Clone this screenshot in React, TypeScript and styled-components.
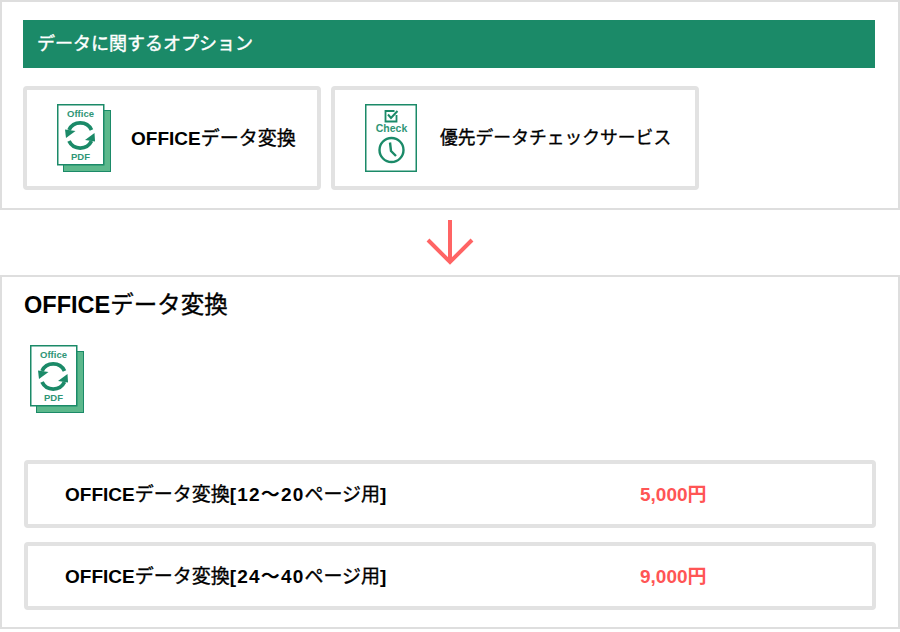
import styled, {createGlobalStyle} from "styled-components";

const GlobalStyle = createGlobalStyle`
    html, body {
        margin: 0;
        padding: 0;
        background: #fff;
    }
    body {
        font-family: "Liberation Sans", "Noto Sans CJK JP", sans-serif;
        color: #000;
    }
    * {
        box-sizing: border-box;
    }
`;

const GREEN = "#1b8a68";

const prices = [
    {id: "small", range: "[12～20", price: "5,000円"},
    {id: "large", range: "[24～40", price: "9,000円"},
];

function OfficeIcon() {
    return (
        <svg width="54" height="68" viewBox="0 0 54 68">
            <rect x="6.5" y="6.5" width="47" height="61" fill="#5cb88c" stroke={GREEN} strokeWidth="1"/>
            <rect x="0.75" y="0.75" width="46" height="60" fill="#fff" stroke={GREEN} strokeWidth="1.5"/>
            <text x="23.5" y="13" textAnchor="middle" fontSize="9.5" fontWeight="700" fill="#2f9676"
                  fontFamily="Liberation Sans, sans-serif">Office</text>
            <path d="M34.5 26 A12.5 12.5 0 0 0 12 26" fill="none" stroke={GREEN} strokeWidth="3.8"/>
            <path d="M8 25.5 L18.5 27 L9 34 Z" fill={GREEN}/>
            <path d="M12 37 A12.5 12.5 0 0 0 34.5 37" fill="none" stroke={GREEN} strokeWidth="3.8"/>
            <path d="M38 37.5 L28 36 L37.5 29 Z" fill={GREEN}/>
            <text x="23.5" y="56" textAnchor="middle" fontSize="9.5" fontWeight="700" fill="#2f9676"
                  fontFamily="Liberation Sans, sans-serif">PDF</text>
        </svg>
    );
}

function CheckIcon() {
    return (
        <svg width="52" height="68" viewBox="0 0 52 68">
            <rect x="0.75" y="0.75" width="50.5" height="66.5" fill="#fff" stroke={GREEN} strokeWidth="1.5"/>
            <path d="M29.5 7 H20.5 V17.5 H31.5 V11" fill="none" stroke={GREEN} strokeWidth="1.8"/>
            <path d="M23 10.5 L26 14 L32.5 7" fill="none" stroke={GREEN} strokeWidth="2"/>
            <text x="26.5" y="28" textAnchor="middle" fontSize="10.5" fontWeight="700" fill="#2f9676"
                  fontFamily="Liberation Sans, sans-serif">Check</text>
            <circle cx="26.5" cy="46" r="12" fill="none" stroke={GREEN} strokeWidth="2.4"/>
            <path d="M25 38.5 L26 47 L31 52" fill="none" stroke={GREEN} strokeWidth="2.4"/>
        </svg>
    );
}

export default function App() {
    return (
        <>
            <GlobalStyle/>
            <Page>
                <TopPanel>
                    <Header>データに関するオプション</Header>
                    <OptionList>
                        <OptionCard $width={298} $gap={20}>
                            <OfficeIcon/>
                            <OptionLabel $size={19}>OFFICE<Light>データ変換</Light></OptionLabel>
                        </OptionCard>
                        <OptionCard $width={368} $gap={23}>
                            <CheckIcon/>
                            <OptionLabel $size={17.8}><Light>優先データチェックサービス</Light></OptionLabel>
                        </OptionCard>
                    </OptionList>
                </TopPanel>
                <ArrowRow>
                    <svg width="50" height="46" viewBox="0 0 50 46">
                        <path d="M25 0 V42 M3 20 L25 42 L47 20" fill="none" stroke="#ff6464" strokeWidth="4"/>
                    </svg>
                </ArrowRow>
                <DetailPanel>
                    <Title>OFFICE<Light>データ変換</Light></Title>
                    <IconRow>
                        <OfficeIcon/>
                    </IconRow>
                    <PriceList>
                        {prices.map((row) => {
                            return (
                                <PriceRow key={row.id}>
                                    <span>OFFICE<Light>データ変換</Light><Range>{row.range}</Range><Light>ページ用</Light>]</span>
                                    <Price>{row.price}</Price>
                                </PriceRow>
                            );
                        })}
                    </PriceList>
                </DetailPanel>
            </Page>
        </>
    );
}

const Page = styled.div`
    width: 900px;
    height: 632px;
    overflow: hidden;
`;

const TopPanel = styled.section`
    height: 210px;
    padding: 18px 23px 18px 21px;
    border: 2px solid #dedede;
`;

const Header = styled.h2`
    display: flex;
    align-items: center;
    height: 48px;
    margin: 0 0 18px;
    padding: 0 0 4px 14px;
    background: #1b8a68;
    color: #fff;
    font-size: 18px;
    font-weight: 400;
    -webkit-text-stroke: 0.4px #fff;
`;

const OptionList = styled.div`
    display: flex;
    gap: 10px;
`;

const OptionCard = styled.div<{$width: number; $gap: number}>`
    display: flex;
    align-items: center;
    width: ${(props) => props.$width}px;
    height: 104px;
    padding-left: 30px;
    gap: ${(props) => props.$gap}px;
    border: 4px solid #e2e2e2;
    border-radius: 4px;
`;

const OptionLabel = styled.span<{$size: number}>`
    margin-bottom: 4px;
    font-size: ${(props) => props.$size}px;
    font-weight: 700;
    white-space: nowrap;
`;

const Light = styled.span`
    font-weight: 400;
    -webkit-text-stroke: 0.35px #000;
`;

const ArrowRow = styled.div`
    display: flex;
    justify-content: center;
    height: 65px;
    padding-top: 10px;
`;

const DetailPanel = styled.section`
    height: 354px;
    padding: 13px 22px 0 22px;
    border: 2px solid #dedede;
`;

const Title = styled.h1`
    margin: 0;
    font-size: 23.5px;
    line-height: 30px;
    font-weight: 700;
`;

const IconRow = styled.div`
    display: flex;
    height: 68px;
    margin-top: 25px;
    padding-left: 6px;
`;

const PriceList = styled.div`
    display: flex;
    flex-direction: column;
    gap: 14px;
    margin-top: 47px;
`;

const PriceRow = styled.div`
    display: grid;
    grid-template-columns: 575px 1fr;
    align-items: center;
    width: 852px;
    height: 68px;
    padding: 0 0 4px 37px;
    border: 4px solid #e2e2e2;
    border-radius: 4px;
    font-size: 19px;
    font-weight: 700;
`;

const Range = styled.span`
    letter-spacing: 1.2px;
`;

const Price = styled.span`
    color: #ff5555;
`;
